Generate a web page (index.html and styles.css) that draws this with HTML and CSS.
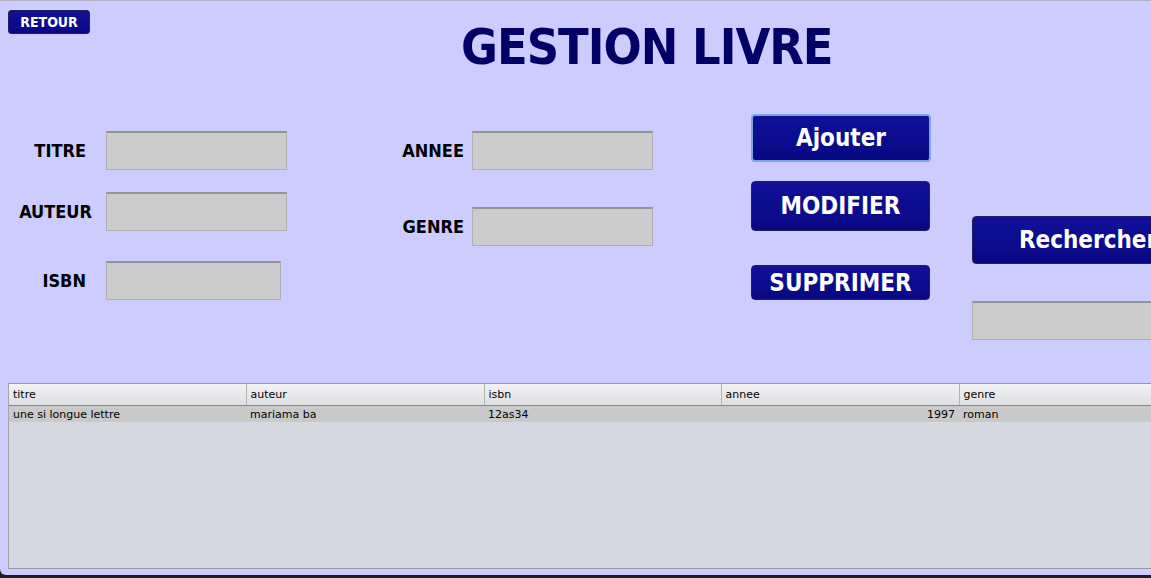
FILE: index.html
```html
<!DOCTYPE html>
<html lang="fr">
<head>
<meta charset="utf-8">
<title>Gestion Livre</title>
<link rel="stylesheet" href="styles.css">
</head>
<body>
<div class="window">
  <header class="header">
    <button class="btn btn-retour">RETOUR</button>
    <h1 class="title">GESTION LIVRE</h1>
  </header>

  <section class="form">
    <div class="col col-left">
      <div class="field f-titre">
        <label class="lbl lbl-inset">TITRE</label>
        <div class="input"></div>
      </div>
      <div class="field f-auteur">
        <label class="lbl">AUTEUR</label>
        <div class="input"></div>
      </div>
      <div class="field f-isbn">
        <label class="lbl lbl-inset">ISBN</label>
        <div class="input input-short"></div>
      </div>
    </div>

    <div class="col col-mid">
      <div class="field f-annee">
        <label class="lbl lbl-mid">ANNEE</label>
        <div class="input"></div>
      </div>
      <div class="field f-genre">
        <label class="lbl lbl-mid">GENRE</label>
        <div class="input"></div>
      </div>
    </div>

    <div class="col col-actions">
      <button class="btn btn-big btn-ajouter">Ajouter</button>
      <button class="btn btn-big btn-modifier">MODIFIER</button>
      <button class="btn btn-big btn-supprimer">SUPPRIMER</button>
    </div>

    <div class="col col-search">
      <button class="btn btn-big btn-rechercher">Rechercher</button>
      <div class="input input-search"></div>
    </div>
  </section>

  <section class="grid-wrap">
    <table class="grid">
      <colgroup>
        <col class="c1"><col class="c2"><col class="c3"><col class="c4"><col class="c5">
      </colgroup>
      <thead>
        <tr><th>titre</th><th>auteur</th><th>isbn</th><th>annee</th><th>genre</th></tr>
      </thead>
      <tbody>
        <tr><td>une si longue lettre</td><td>mariama ba</td><td>12as34</td><td class="num">1997</td><td>roman</td></tr>
      </tbody>
    </table>
  </section>
</div>
</body>
</html>
```

FILE: styles.css
```css
* { box-sizing: border-box; }

html, body {
  margin: 0;
  padding: 0;
  background: #1d1d29;
  overflow: hidden;
  width: 1151px;
  height: 578px;
}

.window {
  width: 1240px;
  height: 575px;
  background: #ccccff;
  border-top: 1px solid #b4b4c8;
  border-radius: 0 0 6px 6px;
  display: flex;
  flex-direction: column;
  font-family: "DejaVu Sans Condensed", "DejaVu Sans", sans-serif;
  font-weight: bold;
  overflow: hidden;
}

/* header */
.header {
  height: 71px;
  padding: 9px 0 0 8px;
  display: flex;
  align-items: flex-start;
  flex: none;
}

.title {
  margin: 12px 0 0 371px;
  font-size: 50px;
  line-height: 50px;
  letter-spacing: -1px;
  color: #000066;
  font-weight: bold;
}

/* buttons */
.btn {
  font-family: "DejaVu Sans Condensed", "DejaVu Sans", sans-serif;
  font-weight: bold;
  color: #ffffff;
  background: linear-gradient(#10109a, #080884);
  border: 1px solid #20205a;
  border-radius: 4px;
  padding: 0;
  display: flex;
  align-items: center;
  justify-content: center;
}

.btn-retour {
  width: 82px;
  height: 24px;
  font-size: 14px;
  border-radius: 3px;
}

.btn-big {
  width: 179px;
  font-size: 24px;
}

.btn-ajouter {
  height: 48px;
  border: 2px solid #7ea6dc;
  width: 180px;
}
.btn-modifier { height: 50px; margin-top: 19px; }
.btn-supprimer { height: 35px; margin-top: 34px; }
.btn-rechercher { height: 48px; width: 232px; }

/* form */
.form {
  height: 311px;
  display: flex;
  align-items: flex-start;
  flex: none;
}

.col { display: flex; flex-direction: column; }

.col-left { padding-top: 59px; }
.col-mid { padding-top: 59px; margin-left: 113px; }
.col-actions { padding-top: 42px; margin-left: 98px; }
.col-search { padding-top: 144px; margin-left: 41px; }

.field {
  display: flex;
  align-items: center;
}

.f-auteur { margin-top: 22px; }
.f-isbn { margin-top: 30px; }
.f-genre { margin-top: 37px; }

.lbl {
  width: 92px;
  text-align: right;
  font-size: 18px;
  color: #000000;
  margin-right: 14px;
}
.lbl-inset { padding-right: 6px; }

.lbl-mid {
  width: 64px;
  margin-right: 8px;
}

.input {
  width: 181px;
  height: 39px;
  background: #cccccc;
  border: 1px solid #afafaf;
  border-top: 2px solid #959595;
}
.input-short { width: 175px; }
.input-search { width: 232px; margin-top: 37px; }

/* table */
.grid-wrap {
  margin-left: 8px;
  height: 186px;
  background: #d5d8e1;
  border-top: 1px solid #9a9a9a;
  border-left: 1px solid #a4a4a4;
  border-bottom: 1px solid #9a9a9a;
  flex: none;
}

.grid {
  border-collapse: collapse;
  table-layout: fixed;
  width: 1231px;
  font-family: "DejaVu Sans", sans-serif;
  font-weight: normal;
  font-size: 11px;
  color: #000000;
}

.c1 { width: 237px; }
.c2 { width: 238px; }
.c3 { width: 237px; }
.c4 { width: 238px; }

.grid th {
  height: 21px;
  text-align: left;
  font-weight: normal;
  padding: 1px 4px 0;
  background: linear-gradient(#f3f3f5, #dedfe2);
  border-right: 1px solid #b3b3b3;
  border-bottom: 1px solid #8a8a8a;
  white-space: nowrap;
}

.grid td {
  height: 17px;
  padding: 1px 4px 0;
  background: #c9c9c9;
  white-space: nowrap;
}

.grid td.num { text-align: right; }
```
